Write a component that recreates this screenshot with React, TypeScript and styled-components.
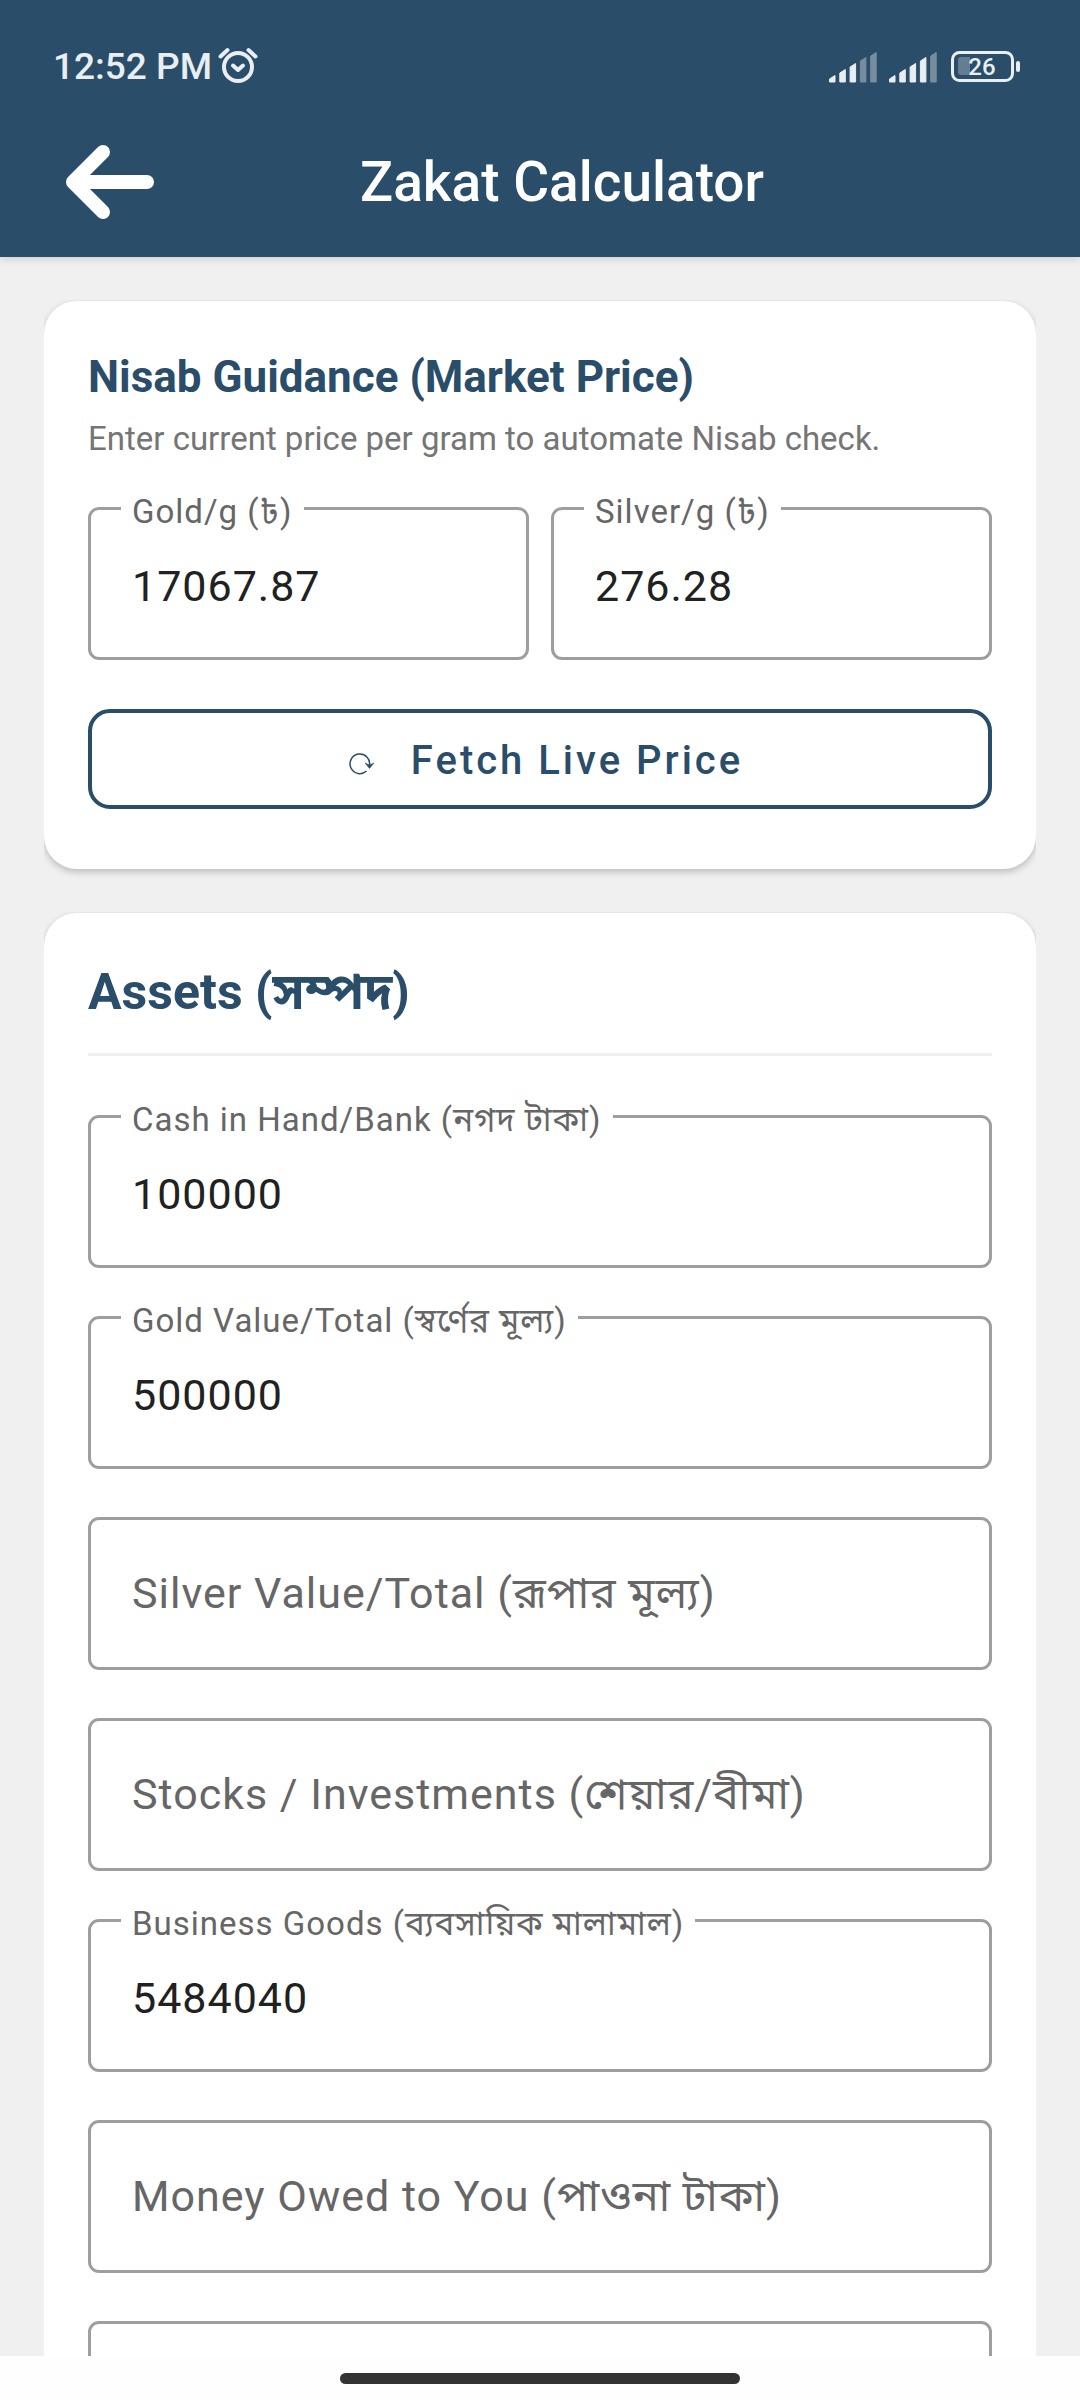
import React, { useId, useState } from "react";
import styled, { createGlobalStyle } from "styled-components";

const navy = "#2a4d69";
const fontStack = `Roboto, "Noto Sans Bengali", "Noto Sans", "DejaVu Sans", sans-serif`;

const GlobalStyle = createGlobalStyle`
  *, *::before, *::after { box-sizing: border-box; }
  body { margin: 0; background: #f0f0f0; font-family: ${fontStack}; }
`;

const Screen = styled.div`
  display: flex;
  flex-direction: column;
  height: 100vh;
  background: #f0f0f0;
`;

const TopArea = styled.header`
  position: relative;
  z-index: 1;
  flex: none;
  background: ${navy};
  color: #fff;
  box-shadow: 0 2px 8px rgba(0, 0, 0, 0.15);
`;

const StatusBar = styled.div`
  display: flex;
  align-items: center;
  justify-content: space-between;
  padding: 44px 60px 0 53px;
  height: 90px;
  color: #e9eef2;
`;

const StatusGroup = styled.div<{ $gap: number }>`
  display: flex;
  align-items: center;
  gap: ${(p) => p.$gap}px;
`;

const Clock = styled.span`
  font-size: 37px;
  line-height: 44px;
  font-weight: 500;
`;

const Toolbar = styled.div`
  display: grid;
  grid-template-columns: 176px 1fr 132px;
  align-items: center;
  height: 167px;
  padding-top: 16px;
`;

const BackButton = styled.button`
  display: flex;
  width: 88px;
  height: 76px;
  margin-left: 66px;
  padding: 0;
  border: 0;
  background: none;
  color: inherit;
  cursor: pointer;
`;

const Title = styled.h1`
  margin: 0;
  font-size: 55px;
  line-height: 64px;
  font-weight: 500;
  text-align: center;
`;

const Content = styled.main`
  display: flex;
  flex: 1;
  flex-direction: column;
  gap: 44px;
  min-height: 0;
  padding: 44px;
  overflow-y: auto;
  scrollbar-width: none;
`;

const Card = styled.section`
  flex: none;
  padding: 44px;
  border-radius: 33px;
  background: #fff;
  box-shadow: 0 3px 7px rgba(0, 0, 0, 0.22);
  clip-path: inset(-1px 0 -12px 0);
`;

const GuidanceTitle = styled.h2`
  margin: 6px 0 0;
  color: ${navy};
  font-size: 44px;
  line-height: 52px;
  font-weight: 700;
`;

const Hint = styled.p`
  margin: 16px 0 48px;
  color: #757575;
  font-size: 33px;
  line-height: 40px;
`;

const SectionTitle = styled.h2`
  margin: 0 0 59px;
  padding: 6px 0 31px;
  border-bottom: 3px solid #eee;
  color: ${navy};
  font-size: 50px;
  line-height: 59px;
  font-weight: 700;
`;

const PriceRow = styled.div`
  display: grid;
  grid-template-columns: 1fr 1fr;
  gap: 22px;
`;

const FieldStack = styled.div`
  display: flex;
  flex-direction: column;
  gap: 48px;
`;

const FieldBox = styled.div`
  position: relative;
  display: flex;
  border: 3px solid #9e9e9e;
  border-radius: 11px;
`;

const FieldInput = styled.input`
  width: 100%;
  min-width: 0;
  height: 147px;
  padding: 4px 41px 0;
  border: 0;
  outline: 0;
  background: none;
  color: #212121;
  font-family: inherit;
  font-size: 43px;
  line-height: 52px;
  letter-spacing: 1px;
`;

const FieldLabel = styled.label<{ $raised: boolean }>`
  position: absolute;
  top: ${(p) => (p.$raised ? "-18px" : "47px")};
  left: 30px;
  padding: 0 11px;
  background: #fff;
  color: #666;
  font-size: ${(p) => (p.$raised ? 33 : 43)}px;
  line-height: ${(p) => (p.$raised ? 40 : 52)}px;
  letter-spacing: 1px;
  white-space: nowrap;
  pointer-events: none;
`;

const FetchButton = styled.button`
  display: flex;
  align-items: center;
  justify-content: center;
  gap: 36px;
  width: 100%;
  height: 100px;
  margin: 49px 0 16px;
  padding: 3px 0 0 12px;
  border: 4px solid ${navy};
  border-radius: 22px;
  background: #fff;
  color: ${navy};
  font-family: inherit;
  font-size: 40px;
  line-height: 46px;
  font-weight: 500;
  letter-spacing: 3px;
  cursor: pointer;
`;

const GestureBar = styled.footer`
  display: flex;
  flex: none;
  justify-content: center;
  padding-top: 17px;
  height: 44px;
  background: #fefefe;
`;

const GestureHandle = styled.div`
  width: 37%;
  height: 11px;
  border-radius: 6px;
  background: #333;
`;

const AlarmIcon = () => (
  <svg width="40" height="40" viewBox="0 2 40 40" fill="none" stroke="currentColor" strokeLinecap="round" strokeLinejoin="round" aria-hidden="true">
    <circle cx="20" cy="22" r="14" strokeWidth="4" />
    <path d="M15 20.500l5 4.500 5-4.500" strokeWidth="4" />
    <path d="M2.500 11.500L9.500 5M37.500 11.500L30.500 5" strokeWidth="4" />
  </svg>
);

const SignalIcon = ({ level }: { level: number }) => (
  <svg width="48" height="32" viewBox="0 0 48 32" fill="currentColor" stroke="currentColor" strokeLinejoin="round" aria-hidden="true">
    {[8, 14, 20, 26, 31].map((h, i) => (
      <path
        key={h}
        opacity={i < level ? 1 : 0.4}
        d={`M${i * 10.3 + 0.5} ${36 - h}L${i * 10.3 + 6} ${32.5 - h}V31H${i * 10.3 + 0.5}Z`}
      />
    ))}
  </svg>
);

const BatteryIcon = ({ percent }: { percent: number }) => (
  <svg width="71" height="32" viewBox="-1 0 71 32" fill="none" aria-hidden="true">
    <rect x="2.500" y="1.500" width="60" height="28" rx="7" stroke="currentColor" strokeWidth="3" />
    <path d="M20 6V24H11a3 3 0 0 1-3-3V9a3 3 0 0 1 3-3Z" fill="currentColor" opacity="0.300" />
    <rect x="66" y="10" width="4" height="11" rx="2" fill="currentColor" />
    <text x="32" y="24" fill="currentColor" fontSize="24" fontWeight="500" fontFamily="Roboto, sans-serif" textAnchor="middle">
      {percent}
    </text>
  </svg>
);

const BackIcon = () => (
  <svg width="88" height="76" viewBox="0 0 88 76" fill="none" stroke="currentColor" strokeWidth="14" strokeLinecap="round" strokeLinejoin="round" aria-hidden="true">
    <path d="M37 8L7 38l30 30M10 38h71" />
  </svg>
);

const ReloadIcon = () => (
  <svg width="26" height="30" viewBox="0 -6 26 30" fill="none" stroke="currentColor" strokeWidth="1.500" aria-hidden="true">
    <path d="M17.500 19A9.800 9.800 0 1 1 20.500 13.500" />
    <path d="M16 11l4.500 2 4.500-2-4.500 5.500z" fill="currentColor" strokeWidth="0.500" />
  </svg>
);

type FieldProps = { label?: string; name?: string; initial?: string };

const Field = ({ label, name, initial = "" }: FieldProps) => {
  const id = useId();
  const [value, setValue] = useState(initial);
  const [focused, setFocused] = useState(false);
  return (
    <FieldBox>
      <FieldInput
        id={id}
        inputMode="decimal"
        aria-label={name}
        value={value}
        onChange={(e) => setValue(e.target.value)}
        onFocus={() => setFocused(true)}
        onBlur={() => setFocused(false)}
      />
      {label && (
        <FieldLabel htmlFor={id} $raised={focused || value !== ""}>
          {label}
        </FieldLabel>
      )}
    </FieldBox>
  );
};

const assetFields: FieldProps[] = [
  { label: "Cash in Hand/Bank (নগদ টাকা)", initial: "100000" },
  { label: "Gold Value/Total (স্বর্ণের মূল্য)", initial: "500000" },
  { label: "Silver Value/Total (রূপার মূল্য)" },
  { label: "Stocks / Investments (শেয়ার/বীমা)" },
  { label: "Business Goods (ব্যবসায়িক মালামাল)", initial: "5484040" },
  { label: "Money Owed to You (পাওনা টাকা)" },
  { name: "Other assets" },
];

export default function App() {
  return (
    <Screen>
      <GlobalStyle />
      <TopArea>
        <StatusBar>
          <StatusGroup $gap={6}>
            <Clock>12:52 PM</Clock>
            <AlarmIcon />
          </StatusGroup>
          <StatusGroup $gap={12}>
            <SignalIcon level={3} />
            <SignalIcon level={4} />
            <BatteryIcon percent={26} />
          </StatusGroup>
        </StatusBar>
        <Toolbar>
          <BackButton type="button" aria-label="Back">
            <BackIcon />
          </BackButton>
          <Title>Zakat Calculator</Title>
        </Toolbar>
      </TopArea>
      <Content>
        <Card>
          <GuidanceTitle>Nisab Guidance (Market Price)</GuidanceTitle>
          <Hint>Enter current price per gram to automate Nisab check.</Hint>
          <PriceRow>
            <Field label="Gold/g (৳)" initial="17067.87" />
            <Field label="Silver/g (৳)" initial="276.28" />
          </PriceRow>
          <FetchButton type="button">
            <ReloadIcon />
            Fetch Live Price
          </FetchButton>
        </Card>
        <Card>
          <SectionTitle>Assets (সম্পদ)</SectionTitle>
          <FieldStack>
            {assetFields.map((field) => (
              <Field key={field.label ?? field.name} {...field} />
            ))}
          </FieldStack>
        </Card>
      </Content>
      <GestureBar>
        <GestureHandle />
      </GestureBar>
    </Screen>
  );
}
